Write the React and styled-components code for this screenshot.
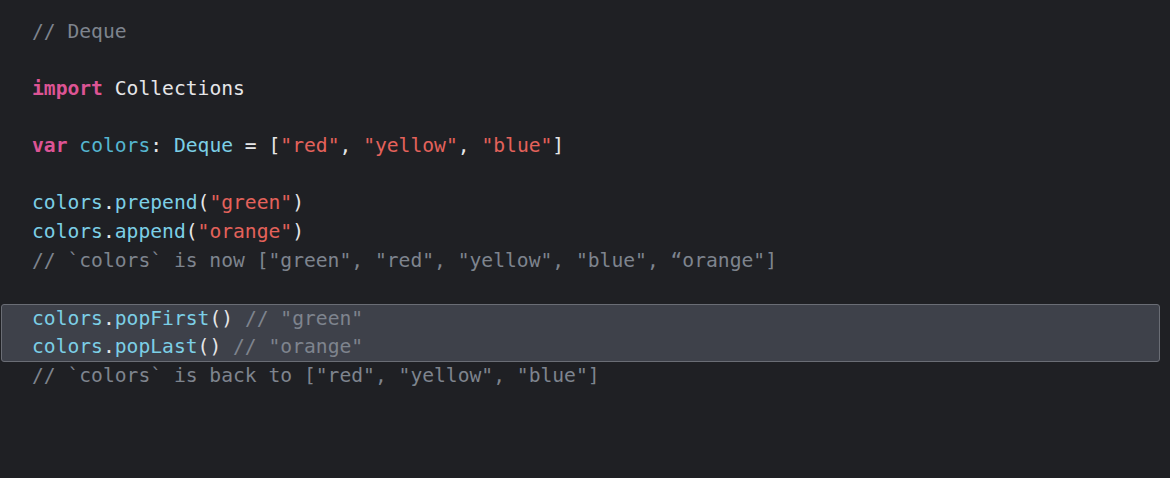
import React from "react";
import styled, { createGlobalStyle } from "styled-components";

const Global = createGlobalStyle`
  html, body { margin: 0; padding: 0; background: #1f2024; }
  body { width: 1170px; height: 478px; overflow: hidden; }
`;

const Editor = styled.div`
  box-sizing: border-box;
  width: 1170px;
  height: 478px;
  background: #1f2024;
  padding: 17.5px 0 0 32px;
  font-family: "DejaVu Sans Mono", "Liberation Mono", monospace;
  font-size: 19.65px;
  line-height: 28.67px;
  color: #e6e6e8;
`;

const Line = styled.div`
  height: 28.67px;
  white-space: pre;
`;

const Highlight = styled.div`
  box-sizing: border-box;
  margin: 0 10px 0 -31px;
  padding-left: 30px;
  border: 1px solid #6a6d75;
  border-radius: 3px;
  background: #3e414a;
  & > div { height: 28px; line-height: 28px; }
`;

const Kw = styled.span`
  color: #dc5494;
  font-weight: bold;
`;
const Var = styled.span`
  color: #55b5d0;
`;
const Fn = styled.span`
  color: #7ccfe6;
`;
const Str = styled.span`
  color: #e4625b;
`;
const Cm = styled.span`
  color: #7e848e;
`;

export default function App() {
  return (
    <>
      <Global />
      <Editor>
        <Line><Cm>// Deque</Cm></Line>
        <Line> </Line>
        <Line><Kw>import</Kw> Collections</Line>
        <Line> </Line>
        <Line>
          <Kw>var</Kw> <Var>colors</Var>: <Fn>Deque</Fn> = [<Str>"red"</Str>, <Str>"yellow"</Str>, <Str>"blue"</Str>]
        </Line>
        <Line> </Line>
        <Line><Fn>colors</Fn>.<Fn>prepend</Fn>(<Str>"green"</Str>)</Line>
        <Line><Fn>colors</Fn>.<Fn>append</Fn>(<Str>"orange"</Str>)</Line>
        <Line><Cm>// `colors` is now ["green", "red", "yellow", "blue", “orange"]</Cm></Line>
        <Line> </Line>
        <Highlight>
          <Line><Fn>colors</Fn>.<Fn>popFirst</Fn>() <Cm>// "green"</Cm></Line>
          <Line><Fn>colors</Fn>.<Fn>popLast</Fn>() <Cm>// "orange"</Cm></Line>
        </Highlight>
        <Line><Cm>// `colors` is back to ["red", "yellow", "blue"]</Cm></Line>
      </Editor>
    </>
  );
}
